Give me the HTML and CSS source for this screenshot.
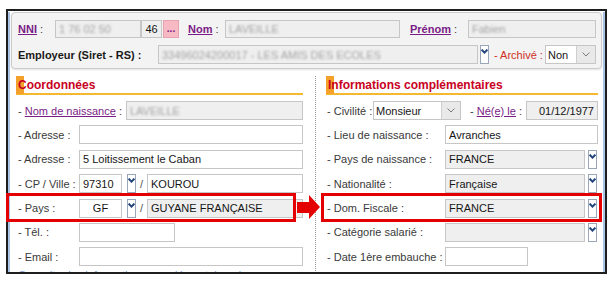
FILE: index.html
```html
<!DOCTYPE html>
<html lang="fr">
<head>
  <meta charset="UTF-8" />
  <title>Fiche salarié</title>
  <link rel="stylesheet" href="styles.css">
</head>
<body>
<div class="shot">
  <div class="window">
    <div class="inner">

      <div class="head-box">
        <div class="hrow">
          <span class="lbl w-nni"><a class="lnk b">NNI</a> :</span>
          <span class="fld ro w86"><span class="blur">1 76 02 50</span></span>
          <span class="fld ro w21 center">46</span>
          <button class="dots">...</button>
          <span class="lbl w-nom"><a class="lnk b">Nom</a> :</span>
          <span class="fld ro w175"><span class="blur">LAVEILLE</span></span>
          <span class="lbl w-prenom"><a class="lnk b">Prénom</a> :</span>
          <span class="fld ro w128"><span class="blur">Fabien</span></span>
        </div>
        <div class="hrow">
          <span class="lbl b dark w-emp">Employeur (Siret - RS) :</span>
          <span class="fld ro w320"><span class="blur">33496024200017 - LES AMIS DES ECOLES</span></span>
          <span class="dd"><svg width="7" height="5" viewBox="0 0 7 5"><path d="M0.6 0.6 L3.5 3.6 L6.4 0.6" /></svg></span>
          <span class="lbl red w-arch">- Archivé :</span>
          <span class="sel w51"><span class="sel-val">Non</span><span class="sel-btn"><svg width="8" height="5" viewBox="0 0 8 5"><path d="M0.5 0.5 L4 4 L7.5 0.5" /></svg></span></span>
        </div>
      </div>

      <div class="sections">
        <section class="sec sec-left">
          <h3 class="sec-title"><span>Coordonnées</span></h3>
          <div class="rows">
            <div class="row">
              <span class="lbl auto">- <a class="lnk">Nom de naissance</a> :</span>
              <span class="fld ro grow"><span class="blur">LAVEILLE</span></span>
            </div>
            <div class="row">
              <span class="lbl w61">- Adresse :</span>
              <span class="fld grow"></span>
            </div>
            <div class="row">
              <span class="lbl w61">- Adresse :</span>
              <span class="fld grow">5 Loitissement le Caban</span>
            </div>
            <div class="row">
              <span class="lbl w61">- CP / Ville :</span>
              <span class="fld w43">97310</span>
              <span class="dd ml5"><svg width="7" height="5" viewBox="0 0 7 5"><path d="M0.6 0.6 L3.5 3.6 L6.4 0.6" /></svg></span>
              <span class="slash">/</span>
              <span class="fld grow">KOUROU</span>
            </div>
            <div class="row">
              <span class="lbl w61">- Pays :</span>
              <span class="fld w43 center">GF</span>
              <span class="dd ml5"><svg width="7" height="5" viewBox="0 0 7 5"><path d="M0.6 0.6 L3.5 3.6 L6.4 0.6" /></svg></span>
              <span class="slash">/</span>
              <span class="fld ro grow">GUYANE FRANÇAISE</span>
            </div>
            <div class="row">
              <span class="lbl w61">- Tél. :</span>
              <span class="fld w96"></span>
            </div>
            <div class="row">
              <span class="lbl w61">- Email :</span>
              <span class="fld grow"></span>
            </div>
            <div class="row">
              <span class="more">Consulter les informations complémentaires de l'établissement</span>
            </div>
          </div>
        </section>

        <div class="sep"></div>

        <section class="sec sec-right">
          <h3 class="sec-title"><span>Informations complémentaires</span></h3>
          <div class="rows">
            <div class="row">
              <span class="lbl w46">- Civilité :</span>
              <span class="sel w88"><span class="sel-val">Monsieur</span><span class="sel-btn"><svg width="8" height="5" viewBox="0 0 8 5"><path d="M0.5 0.5 L4 4 L7.5 0.5" /></svg></span></span>
              <span class="lbl w56 ml9">- <a class="lnk">Né(e) le</a> :</span>
              <span class="fld ro grow right">01/12/1977</span>
            </div>
            <div class="row">
              <span class="lbl w118">- Lieu de naissance :</span>
              <span class="fld grow">Avranches</span>
            </div>
            <div class="row">
              <span class="lbl w118">- Pays de naissance :</span>
              <span class="fld ro w140">FRANCE</span>
              <span class="dd ml3"><svg width="7" height="5" viewBox="0 0 7 5"><path d="M0.6 0.6 L3.5 3.6 L6.4 0.6" /></svg></span>
            </div>
            <div class="row">
              <span class="lbl w118">- Nationalité :</span>
              <span class="fld ro w140">Française</span>
              <span class="dd ml3"><svg width="7" height="5" viewBox="0 0 7 5"><path d="M0.6 0.6 L3.5 3.6 L6.4 0.6" /></svg></span>
            </div>
            <div class="row">
              <span class="lbl w118">- Dom. Fiscale :</span>
              <span class="fld ro w140">FRANCE</span>
              <span class="dd ml3"><svg width="7" height="5" viewBox="0 0 7 5"><path d="M0.6 0.6 L3.5 3.6 L6.4 0.6" /></svg></span>
            </div>
            <div class="row">
              <span class="lbl w118">- Catégorie salarié :</span>
              <span class="fld ro w140"></span>
              <span class="dd ml3"><svg width="7" height="5" viewBox="0 0 7 5"><path d="M0.6 0.6 L3.5 3.6 L6.4 0.6" /></svg></span>
            </div>
            <div class="row">
              <span class="lbl w118">- Date 1ère embauche :</span>
              <span class="fld w83"></span>
            </div>
          </div>
        </section>
      </div>

    </div>
  </div>

  <!-- annotations drawn over the capture -->
  <div class="mark mark-left"></div>
  <div class="mark mark-right"></div>
  <div class="arrow"><span class="arrow-shaft"></span><span class="arrow-head"></span></div>
</div>
</body>
</html>
```

FILE: styles.css
```css
body {
  margin: 0;
  background: #fff;
  font-family: 'Liberation Sans', Arial, sans-serif;
  font-size: 11px;
  color: #3a3a3a;
}
.shot {
  position: relative;
  width: 615px;
  height: 282px;
  padding-top: 9px;
  box-sizing: border-box;
}
.window {
  margin-left: 6px;
  width: 597px;
  height: 261px;
  border: 2px solid #1e1e1e;
  overflow: hidden;
  background: #fff;
}
.inner {
  height: 100%;
  border-left: 2px solid #a9c4e6;
  border-right: 2px solid #a9c4e6;
  box-sizing: border-box;
  background: #fff;
}

/* header block */
.head-box {
  margin: 1px 1px 0 1px;
  height: 57px;
  box-sizing: border-box;
  padding: 7px 6px 0 6px;
  background: #f3f3f3;
  border: 1px solid #cbcbcb;
  border-radius: 4px;
  box-shadow: 0 1px 2px rgba(0, 0, 0, 0.12);
  display: flex;
  flex-direction: column;
  gap: 7px;
}
.hrow {
  display: flex;
  align-items: center;
  height: 18px;
}
.hrow + .hrow {
  height: 19px;
}
.lbl {
  flex: none;
  white-space: nowrap;
}
.b { font-weight: bold; }
.dark { color: #1a1a1a; }
.red { color: #cf2d22; }
.lnk {
  color: #7a1c86;
  text-decoration: underline;
}
.w-nni { width: 37px; }
.w-nom { width: 37px; margin-left: 9px; }
.w-prenom { width: 58px; margin-left: 10px; }
.w-emp { width: 140px; }
.w-arch { width: 51px; margin-left: 5px; }

.fld {
  flex: none;
  height: 19px;
  box-sizing: border-box;
  border: 1px solid #c6c6c6;
  background: #fff;
  color: #161616;
  padding: 0 3px;
  display: flex;
  align-items: center;
  white-space: nowrap;
  overflow: hidden;
}
.hrow .fld { height: 100%; }
.fld.ro { background: #efefef; }
.fld.center { justify-content: center; }
.fld.right { justify-content: flex-end; }
.grow { flex: 1; }
.blur {
  color: #a4a4a4;
  filter: blur(0.9px);
}
.w21 { width: 21px; }
.w43 { width: 43px; }
.w51 { width: 51px; }
.w83 { width: 83px; }
.w86 { width: 86px; }
.w88 { width: 88px; }
.w96 { width: 96px; }
.w128 { width: 128px; }
.w140 { width: 140px; }
.w175 { width: 175px; }
.w320 { width: 320px; }
.w46 { width: 46px; }
.w56 { width: 56px; }
.w61 { width: 61px; }
.w118 { width: 118px; }
.ml3 { margin-left: 3px; }
.ml5 { margin-left: 5px; }
.ml9 { margin-left: 9px; }

.dots {
  flex: none;
  width: 16px;
  height: 100%;
  margin-left: 1px;
  padding: 0;
  border: 1px solid #e6a2ad;
  background: #f7b9c3;
  color: #7a1c86;
  font: bold 10px 'Liberation Sans', Arial, sans-serif;
  line-height: 8px;
}

/* small combo button with blue chevron */
.dd {
  flex: none;
  width: 9px;
  height: 19px;
  box-sizing: border-box;
  border: 1px solid #9aa7b8;
  background: #fff;
  display: flex;
  justify-content: center;
  padding-top: 3px;
}
.hrow .dd { margin-left: 2px; }
.dd svg path {
  fill: none;
  stroke: #24467c;
  stroke-width: 2;
}

/* select box */
.sel {
  flex: none;
  height: 19px;
  box-sizing: border-box;
  border: 1px solid #c6c6c6;
  background: #fff;
  display: flex;
}
.sel-val {
  flex: 1;
  padding-left: 2px;
  color: #161616;
  display: flex;
  align-items: center;
}
.sel-btn {
  width: 18px;
  background: #e9e9e9;
  border-left: 1px solid #cfcfcf;
  display: flex;
  align-items: center;
  justify-content: center;
}
.sel-btn svg path {
  fill: none;
  stroke: #7a7a7a;
  stroke-width: 1;
}

/* sections */
.sections {
  display: flex;
  margin-top: 7px;
}
.sec-left {
  margin-left: 6px;
  width: 287px;
}
.sep {
  margin-left: 12px;
  width: 0;
  border-left: 1px dotted #9a9a9a;
}
.sec-right {
  margin-left: 10px;
  width: 272px;
}
.sec-title {
  margin: 0;
  height: 17px;
  border-bottom: 2px solid #f6b82e;
  position: relative;
  font-size: 12px;
  font-weight: bold;
  color: #c8001e;
  line-height: 18px;
}
.sec-title::before {
  content: '';
  position: absolute;
  left: 0;
  top: 0;
  width: 8px;
  height: 18px;
  background: #f3a12a;
}
.sec-title span {
  position: relative;
  margin-left: 2px;
}
.rows {
  margin-top: 6px;
  display: flex;
  flex-direction: column;
  gap: 5.4px;
}
.row {
  display: flex;
  align-items: center;
  height: 19px;
  padding-left: 2px;
}
.sec-right .row { padding-left: 1px; }
.row .lbl.auto { margin-right: 4px; }
.slash {
  flex: none;
  width: 11px;
  text-align: center;
  color: #555;
}
.more {
  color: #7da0cf;
}

/* red annotations */
.mark {
  position: absolute;
  border: 3px solid #e40000;
  box-sizing: border-box;
}
.mark-left {
  left: 6px;
  top: 193px;
  width: 290px;
  height: 29px;
}
.mark-right {
  left: 321px;
  top: 193px;
  width: 281px;
  height: 29px;
}
.arrow {
  position: absolute;
  left: 297px;
  top: 195px;
  display: flex;
  align-items: center;
  height: 24px;
}
.arrow-shaft {
  width: 12px;
  height: 11px;
  background: #e40000;
}
.arrow-head {
  width: 0;
  height: 0;
  border-top: 12px solid transparent;
  border-bottom: 12px solid transparent;
  border-left: 11px solid #e40000;
}
```
